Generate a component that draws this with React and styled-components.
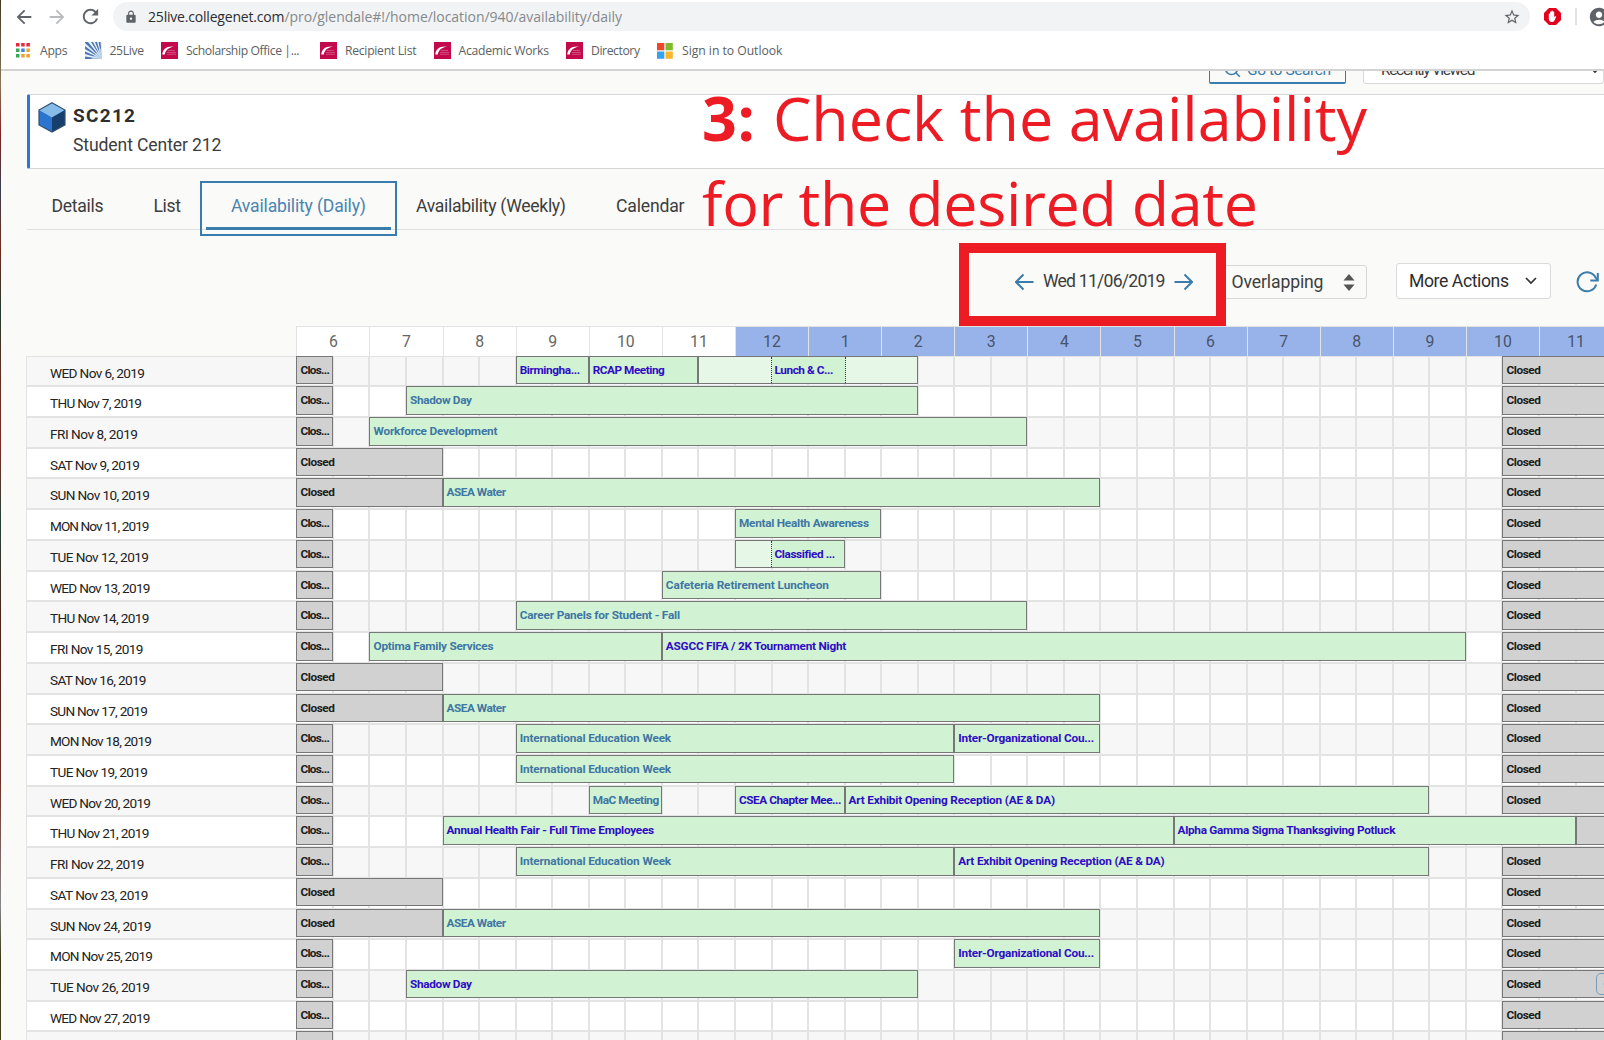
import React, { Component, createRef } from 'react';
import styled, { createGlobalStyle, css } from 'styled-components';
import {
  MdArrowBack, MdArrowForward, MdRefresh, MdLock, MdStarBorder, MdAccountCircle, MdArrowUpward,
} from 'react-icons/md';

const colors = {
  page: '#fafaf8',
  line: '#e3e3e3',
  link: '#3a7cab',
  text: '#3d3d3d',
  visited: '#2f0cc4',
  unvisited: '#3f76a3',
  booked: '#d1f3d4',
  setup: '#e6f7e8',
  closed: '#d1d1d1',
  afternoon: '#97b3ea',
  red: '#ed1c24',
};

const SLOT = 36.55; // half an hour, in px
const LAST = 36;

// columns count half hours from 6:00
const ev = (from, to, label, width, extra) => ({ from, to, label, width, ...extra });
const early = ev(0, 1, 'Clos...', 29.5, { closed: true });
const weekend = ev(0, 4, 'Closed', 34.5, { closed: true });
const late = ev(33, LAST, 'Closed', 34.5, { closed: true });
const seen = { visited: true };
const asea = ev(4, 22, 'ASEA Water', 59.5);
const interOrg = ev(18, 22, 'Inter-Organizational Cou...', 136, seen);
const eduWeek = ev(6, 18, 'International Education Week', 151.5);

const days = [
  ['WED Nov 6, 2019', 95, [
    early,
    ev(6, 8, 'Birmingha...', 60.5, seen),
    ev(8, 11, 'RCAP Meeting', 72, seen),
    ev(11, 17, 'Lunch & C...', 59, { visited: true, setup: 2, takedown: 2 }),
    late,
  ]],
  ['THU Nov 7, 2019', 92, [early, ev(3, 17, 'Shadow Day', 62), late]],
  ['FRI Nov 8, 2019', 88, [early, ev(2, 20, 'Workforce Development', 124), late]],
  ['SAT Nov 9, 2019', 90, [weekend, late]],
  ['SUN Nov 10, 2019', 100, [weekend, asea, late]],
  ['MON Nov 11, 2019', 99.5, [early, ev(12, 16, 'Mental Health Awareness', 130), late]],
  ['TUE Nov 12, 2019', 99, [
    early,
    ev(12, 15, 'Classified ...', 60.5, { visited: true, setup: 1 }),
    late,
  ]],
  ['WED Nov 13, 2019', 100.5, [early, ev(10, 16, 'Cafeteria Retirement Luncheon', 163), late]],
  ['THU Nov 14, 2019', 99.5, [early, ev(6, 20, 'Career Panels for Student - Fall', 160.5), late]],
  ['FRI Nov 15, 2019', 93.5, [
    early,
    ev(2, 10, 'Optima Family Services', 120),
    ev(10, 32, 'ASGCC FIFA / 2K Tournament Night', 180.5, seen),
    late,
  ]],
  ['SAT Nov 16, 2019', 96.5, [weekend, late]],
  ['SUN Nov 17, 2019', 98, [weekend, asea, late]],
  ['MON Nov 18, 2019', 102, [early, eduWeek, interOrg, late]],
  ['TUE Nov 19, 2019', 98, [early, eduWeek, late]],
  ['WED Nov 20, 2019', 101, [
    early,
    ev(8, 10, 'MaC Meeting', 66.5),
    ev(12, 15, 'CSEA Chapter Mee...', 102.5, seen),
    ev(15, 31, 'Art Exhibit Opening Reception (AE & DA)', 206.5, seen),
    late,
  ]],
  ['THU Nov 21, 2019', 99.5, [
    early,
    ev(4, 24, 'Annual Health Fair - Full Time Employees', 207.5, seen),
    ev(24, 35, 'Alpha Gamma Sigma Thanksgiving Potluck', 218, seen),
    ev(35, LAST, '', 0, { closed: true }),
  ]],
  ['FRI Nov 22, 2019', 94.5, [
    early,
    eduWeek,
    ev(18, 31, 'Art Exhibit Opening Reception (AE & DA)', 206.5, seen),
    late,
  ]],
  ['SAT Nov 23, 2019', 98.5, [weekend, late]],
  ['SUN Nov 24, 2019', 101.5, [weekend, asea, late]],
  ['MON Nov 25, 2019', 103, [early, interOrg, late]],
  ['TUE Nov 26, 2019', 100, [early, ev(3, 17, 'Shadow Day', 62, seen), late]],
  ['WED Nov 27, 2019', 100.5, [early, late]],
  ['', 0, [ev(0, 1, '', 0, { closed: true }), ev(33, LAST, '', 0, { closed: true })]],
];

const hours = [6, 7, 8, 9, 10, 11, 12, 1, 2, 3, 4, 5, 6, 7, 8, 9, 10, 11];

// Tracks the text in or out so it fills the given width.
class Fit extends Component {
  constructor(props) {
    super(props);
    this.ref = createRef();
    this.state = { spacing: 0 };
  }

  componentDidMount() {
    const { width, children } = this.props;
    const natural = this.ref.current.getBoundingClientRect().width;
    if (!width || children.length < 2) return;
    this.setState({ spacing: (width - natural) / (children.length - 1) });
  }

  render() {
    const { width, children } = this.props;
    return (
      <FitBox $width={width}>
        <span ref={this.ref} style={{ letterSpacing: this.state.spacing }}>{children}</span>
      </FitBox>
    );
  }
}

const CranberryIcon = () => (
  <svg width="17" height="17" viewBox="0 0 17 17">
    <rect width="17" height="17" fill="#c3094b" />
    <path d="M1.3 12.6C1.500 7 6 3.500 13.500 4.600 8 5.300 4.500 8 3.800 12.600z" fill="#fff" />
    <path d="M7 8.500h7M6 10.500h9M6 12.300h9" stroke="#d65a88" strokeWidth="0.8" />
  </svg>
);

const AppsIcon = () => (
  <svg width="14" height="15" viewBox="0 0 14 15">
    {['#e8283b', '#e8283b', '#e8283b', '#3ba55c', '#3b86e8', '#f0a02c', '#3ba55c', '#f0a02c', '#f0a02c'].map((fill, i) => (
      <rect key={i} x={(i % 3) * 5.2} y={Math.floor(i / 3) * 5.5} width="3.5" height="3.5" fill={fill} />
    ))}
  </svg>
);

const LiveIcon = () => (
  <svg width="17" height="17" viewBox="0 0 17 17">
    <rect width="17" height="17" fill="#4f76b4" />
    <path d="M17 17L0 1v3zM17 17L3 0h3zM17 17L8 0h2zM17 17L12 0h1.500zM17 17L0 7v2.500zM17 17L0 12v2.500zM17 17V0h-1.500z" fill="#e6f3fb" />
    <path d="M17 17V5L6 17z" fill="#d8eefa" opacity=".55" />
  </svg>
);

const OutlookIcon = () => (
  <svg width="16" height="16" viewBox="0 0 16 16">
    <path d="M0 0h7.300v7.300H0z" fill="#f1452b" />
    <path d="M8.500 0h7.300v7.300H8.500z" fill="#7fba2c" />
    <path d="M0 8.500h7.300v7.300H0z" fill="#35a3ee" />
    <path d="M8.500 8.500h7.300v7.300H8.500z" fill="#fbb62d" />
  </svg>
);

const BlockerIcon = () => (
  <svg width="17" height="17" viewBox="0 0 17 17">
    <path d="M5 0h7l5 5v7l-5 5H5l-5-5V5z" fill="#e2001c" />
    <path d="M4.800 8.500V6q.7-.9 1.300 0V3.800q.8-.8 1.300 0V3q.8-.9 1.400 0v.8q.8-.8 1.400 0V9l1-.8q1-.3 1 .5l-1.700 3.800q-.8 1.500-2.500 1.500-3.200 0-3.200-3.500z" fill="#fff" />
  </svg>
);

const CubeIcon = () => (
  <svg width="28" height="31" viewBox="0 0 28 31">
    <path d="M14 .8L27 8v15L14 30 1 23V8z" fill="#2b74d0" />
    <path d="M14 .8L27 8l-13 7.500L1 8z" fill="#88bce8" />
    <path d="M27 8v15l-13 7V15.500z" fill="#173f6b" />
    <path d="M14 .8L27 8v15L14 30 1 23V8z" fill="none" stroke="#33526f" strokeWidth="1.2" />
  </svg>
);

const Arrow = ({ flip }) => (
  <svg width="19" height="18" viewBox="0 0 19 18" fill="none" stroke={colors.link} strokeWidth="2">
    <path d={flip ? 'M.5 9H17.500M10.500 1.500L18 9l-7.500 7.500' : 'M18.500 9H1.500M8.500 1.500L1 9l7.500 7.500'} />
  </svg>
);

const Sorter = () => (
  <svg width="12" height="17" viewBox="0 0 12 17" fill="#555">
    <path d="M6 0l5.500 6.500H.5zM6 17l5.500-6.500H.5z" />
  </svg>
);

const Chevron = () => (
  <svg width="12" height="8" viewBox="0 0 12 8" fill="none" stroke="#333" strokeWidth="1.7">
    <path d="M1 1l5 5 5-5" />
  </svg>
);

const ReloadIcon = () => (
  <svg width="23" height="22" viewBox="0 0 23 22" fill="none" stroke={colors.link} strokeWidth="2">
    <path d="M20.200 13.500A9.500 9.500 0 1 1 19.600 6.500L21.500 9" />
    <path d="M21.800 2v7.500h-7.500" />
  </svg>
);

const SearchIcon = () => (
  <svg width="17" height="17" viewBox="0 0 17 17" fill="none" stroke={colors.link} strokeWidth="1.6">
    <circle cx="7.5" cy="7.5" r="6" />
    <path d="M11.800 11.800l4 4" />
  </svg>
);

const bookmarks = [
  [AppsIcon, 'Apps', 27.5, 10],
  [LiveIcon, '25Live', 34.5],
  [CranberryIcon, 'Scholarship Office |...', 113.5, 8, 3.5],
  [CranberryIcon, 'Recipient List', 71.5],
  [CranberryIcon, 'Academic Works', 90.5],
  [CranberryIcon, 'Directory', 49],
  [OutlookIcon, 'Sign in to Outlook', 100.5, 9],
];

const tabs = [
  ['Details', 52],
  ['List', 27.5],
  ['Availability (Daily)', 135],
  ['Availability (Weekly)', 150],
  ['Calendar', 68.5],
];

class App extends Component {
  state = { tab: 2 };

  handleTab = tab => () => this.setState({ tab });

  renderEvent = (item) => {
    const span = item.to - item.from;
    return (
      <Event key={item.from} $from={item.from} $span={span} $closed={item.closed}>
        {item.setup && <Padding $slots={item.setup} $side="right" />}
        <EventText $closed={item.closed} $visited={item.visited}>
          {item.label && <Fit width={item.width}>{item.label}</Fit>}
        </EventText>
        {item.takedown && <Padding $slots={item.takedown} $side="left" />}
      </Event>
    );
  };

  render() {
    const { tab: active } = this.state;

    return (
      <Screen>
        <GlobalStyle />
        <DesktopEdge />
        <Window>
          <BrowserBar>
            <NavButtons>
              <MdArrowBack size={22} />
              <MdArrowForward size={22} color="#b9bbbd" />
              <MdRefresh size={23} />
            </NavButtons>
            <AddressBar>
              <MdLock size={14} color="#5f6368" />
              <Address>
                <Fit width={136.5}>25live.collegenet.com</Fit>
                <AddressPath>
                  <Fit width={337.5}>/pro/glendale#!/home/location/940/availability/daily</Fit>
                </AddressPath>
              </Address>
              <MdStarBorder size={18} />
            </AddressBar>
            <Extensions>
              <BlockerIcon />
              <Divider />
              <MdAccountCircle size={22} />
            </Extensions>
          </BrowserBar>
          <Bookmarks>
            {bookmarks.map(([Icon, label, width, gap, after]) => (
              <Bookmark key={label} $gap={gap} $after={after}>
                <Icon />
                <Fit width={width}>{label}</Fit>
              </Bookmark>
            ))}
          </Bookmarks>

          <QuickLinks>
            <SearchButton>
              <SearchIcon />
              <Fit width={84}>Go to Search</Fit>
            </SearchButton>
            <RecentSelect>
              <Fit width={94.5}>Recently Viewed</Fit>
              <Chevron />
            </RecentSelect>
          </QuickLinks>

          <LocationCard>
            <CubeIcon />
            <div>
              <LocationName><Fit width={62}>SC212</Fit></LocationName>
              <LocationTitle><Fit width={148.5}>Student Center 212</Fit></LocationTitle>
            </div>
          </LocationCard>

          <Tabs>
            {tabs.map(([label, width], i) => (
              <Tab key={label} $active={i === active} onClick={this.handleTab(i)}>
                <Fit width={width}>{label}</Fit>
              </Tab>
            ))}
          </Tabs>

          <Toolbar>
            <Arrow />
            <DateText><Fit width={122.5}>Wed 11/06/2019</Fit></DateText>
            <Arrow flip />
            <ModeSelect>
              <Fit width={92}>Overlapping</Fit>
              <Sorter />
            </ModeSelect>
            <ActionsButton>
              <Fit width={100}>More Actions</Fit>
              <Chevron />
            </ActionsButton>
            <ReloadIcon />
          </Toolbar>

          <HourRow>
            {hours.map((hour, i) => <Hour key={i} $pm={i > 5}>{hour}</Hour>)}
          </HourRow>
          {days.map(([label, width, items], i) => (
            <DayRow key={i} $odd={i % 2 === 0}>
              <DayLabel>{label && <Fit width={width}>{label}</Fit>}</DayLabel>
              <Slots>
                {Array.from({ length: LAST }, (_, n) => <Slot key={n} $column={n} />)}
                {items.map(this.renderEvent)}
              </Slots>
            </DayRow>
          ))}
        </Window>

        <Note>
          <NoteLine>
            <b><Fit width={53}>3:</Fit></b>
            <Fit width={594}>Check the availability</Fit>
          </NoteLine>
          <NoteLine><Fit width={556}>for the desired date</Fit></NoteLine>
        </Note>
        <Highlight />
        <ScrollTop><MdArrowUpward size={14} /></ScrollTop>
      </Screen>
    );
  }
}

const GlobalStyle = createGlobalStyle`
  * { box-sizing: border-box; }
  body {
    margin: 0;
    overflow: hidden;
    background: ${colors.page};
    font-family: Roboto, "Liberation Sans", sans-serif;
    color: ${colors.text};
  }
  svg { display: block; flex-shrink: 0; }
`;

const FitBox = styled.span`
  display: inline-block;
  flex-shrink: 0;
  width: ${props => props.$width}px;
  white-space: pre;
`;

const Screen = styled.div`
  position: relative;
  display: flex;
  width: 1604px;
  height: 1040px;
  overflow: hidden;
`;

const DesktopEdge = styled.div`
  width: 1px;
  background: linear-gradient(#40361f, #8a7658 8%, #7d2222 13%, #39404e 18%, #6d2b1d 24%, #21392f 30%, #5f3020 36%, #772c26 43%, #24423a 50%, #4e2319 60%, #6b3025 75%, #87888c 87%, #3c3b18 92%, #41401b);
`;

const Window = styled.div`
  width: 1603px;
  height: 1040px;
  overflow: hidden;
  flex-shrink: 0;
`;

const BrowserBar = styled.div`
  display: flex;
  align-items: center;
  height: 33px;
  background: #fff;
  color: #5f6368;
`;

const NavButtons = styled.div`
  display: flex;
  align-items: center;
  flex-shrink: 0;
  gap: 11px;
  width: 112px;
  padding-left: 12px;
`;

const AddressBar = styled.div`
  display: flex;
  align-items: center;
  flex-shrink: 0;
  width: 1417px;
  height: 29px;
  padding: 0 9px 0 11px;
  border-radius: 15px;
  background: #f1f3f4;
`;

const Address = styled.div`
  flex: 1;
  margin-left: 10px;
  font: 14px/28px "Open Sans", "Noto Sans", sans-serif;
  color: #2b2d30;
`;

const AddressPath = styled.span`
  color: #85898d;
`;

const Extensions = styled.div`
  display: flex;
  align-items: center;
  flex-shrink: 0;
  margin-left: 14px;
`;

const Divider = styled.div`
  width: 2px;
  height: 17px;
  margin: 0 11px 0 14px;
  background: #e0e2e4;
`;

const Bookmarks = styled.div`
  display: flex;
  align-items: center;
  gap: 17px;
  height: 38px;
  padding: 0 0 1px 15px;
  border-bottom: 2px solid #d3d3d3;
  background: #fff;
  font: 12.2px/20px "Open Sans", "Noto Sans", sans-serif;
  color: #5c5f63;
`;

const Bookmark = styled.div`
  display: flex;
  align-items: center;
  gap: ${props => props.$gap || 8}px;
  margin-right: ${props => props.$after || 0}px;
`;

const QuickLinks = styled.div`
  display: flex;
  gap: 17px;
  height: 23px;
  padding-left: 1208px;
  overflow: hidden;
  font-size: 15.5px;
  line-height: 18px;
`;

const SearchButton = styled.div`
  display: flex;
  align-items: center;
  gap: 6px;
  flex-shrink: 0;
  width: 137px;
  height: 30px;
  margin-top: -17px;
  padding: 2px 14px 0;
  border: 1px solid ${colors.link};
  border-bottom-width: 2px;
  border-radius: 2px;
  color: ${colors.link};
`;

const RecentSelect = styled.div`
  display: flex;
  align-items: center;
  justify-content: space-between;
  flex-shrink: 0;
  width: 241px;
  height: 30px;
  margin-top: -17px;
  padding: 2px 2px 0 17px;
  border: 1px solid #d9d9d9;
  border-radius: 3px;
  background: #fff;
`;

const LocationCard = styled.div`
  display: flex;
  gap: 7px;
  height: 75px;
  margin-left: 26px;
  padding: 7px 0 0 8px;
  border: 1px solid #d6d6d6;
  border-left: 3px solid #2f75d6;
  border-right: 0;
  border-radius: 2px 0 0 2px;
  background: #fff;
`;

const LocationName = styled.div`
  margin-top: 2px;
  font-size: 19px;
  font-weight: 700;
  line-height: 24px;
  color: #2f2f2f;
`;

const LocationTitle = styled.div`
  margin-top: 5px;
  font-size: 17.6px;
  line-height: 25px;
`;

const Tabs = styled.div`
  display: flex;
  height: 61px;
  margin-left: 25.5px;
  padding-top: 18px;
  border-bottom: 1px solid #e0e0e0;
`;

const Tab = styled.div`
  height: 43px;
  padding: 0 25px;
  font-size: 17.6px;
  line-height: 38px;
  cursor: pointer;
  ${props => props.$active && css`
    border-bottom: 3px solid ${colors.link};
    outline: 2px solid ${colors.link};
    outline-offset: 4px;
    color: #4b84b1;
  `}
`;

const Toolbar = styled.div`
  display: flex;
  align-items: center;
  height: 96px;
  padding: 8px 0 0 1014px;
  font-size: 17.6px;
`;

const DateText = styled.div`
  flex-shrink: 0;
  margin: -3px 8px 0 9px;
`;

const ModeSelect = styled.div`
  display: flex;
  align-items: center;
  justify-content: space-between;
  flex-shrink: 0;
  width: 150px;
  height: 34px;
  margin-left: 24.5px;
  padding: 0 11px 0 13.5px;
  border: 1px solid #d6d6d6;
  border-radius: 3px;
`;

const ActionsButton = styled.div`
  display: flex;
  align-items: center;
  justify-content: space-between;
  flex-shrink: 0;
  width: 155px;
  height: 36px;
  margin: -2px 25px 0 29px;
  padding: 0 13px 0 12px;
  border: 1px solid #dadada;
  border-radius: 3px;
  background: #fff;
  color: #2d2d2d;
`;

const HourRow = styled.div`
  display: grid;
  grid-template-columns: repeat(18, ${SLOT * 2}px);
  height: 29.6px;
  margin-left: 295.4px;
`;

const Hour = styled.div`
  padding-top: 1px;
  border-top: 1px solid ${colors.line};
  border-left: 1px solid ${colors.line};
  background: ${props => (props.$pm ? colors.afternoon : '#fff')};
  color: ${props => (props.$pm ? '#49546b' : '#666')};
  font-size: 15.8px;
  line-height: 28px;
  text-align: center;
`;

const DayRow = styled.div`
  display: flex;
  height: 30.72px;
  margin-left: 25px;
  border-top: 1px solid ${colors.line};
  border-bottom: 1px solid ${colors.line};
  background: ${props => (props.$odd ? '#f7f7f7' : '#fff')};
`;

const DayLabel = styled.div`
  flex-shrink: 0;
  width: 270.4px;
  padding: 2px 0 0 23px;
  border-left: 1px solid ${colors.line};
  font-size: 13.6px;
  line-height: 28px;
  color: #222;
`;

const Slots = styled.div`
  display: grid;
  grid-template-columns: repeat(${LAST}, ${SLOT}px);
  grid-template-rows: 28.72px;
`;

const Slot = styled.div`
  grid-row: 1;
  grid-column: ${props => props.$column + 1};
  border: solid ${colors.line};
  border-width: 0 1px;
`;

const Event = styled.div`
  display: flex;
  grid-row: 1;
  grid-column: ${props => props.$from + 1} / span ${props => props.$span};
  z-index: 1;
  height: 28.5px;
  margin-top: -1px;
  border: 1px solid #777;
  background: ${props => (props.$closed ? colors.closed : colors.booked)};
`;

const EventText = styled.div`
  flex: 1;
  min-width: 0;
  padding-left: 3px;
  font-size: 11.8px;
  font-weight: 700;
  line-height: 26px;
  color: ${props => (props.$visited ? colors.visited : colors.unvisited)};
  ${props => props.$closed && 'color: #1c1c1c;'}
`;

const Padding = styled.div`
  flex-shrink: 0;
  width: ${props => props.$slots * SLOT - 1}px;
  border-${props => props.$side}: 1px dotted #333;
  background: ${colors.setup};
`;

const Note = styled.div`
  position: absolute;
  top: 75px;
  left: 702px;
  z-index: 2;
  font: 61px/85px "Open Sans", "Noto Sans", sans-serif;
  color: ${colors.red};
`;

const NoteLine = styled.div`
  display: flex;
  gap: 18px;
  height: 85px;
`;

const Highlight = styled.div`
  position: absolute;
  top: 243px;
  left: 959px;
  z-index: 2;
  width: 267px;
  height: 83px;
  border: 10px solid ${colors.red};
`;

const ScrollTop = styled.div`
  position: absolute;
  top: 973px;
  left: 1596px;
  z-index: 2;
  width: 24px;
  height: 22px;
  padding: 3px 0 0 4px;
  border: 1px solid #7d9ab5;
  border-radius: 5px;
  color: #7d9ab5;
`;

export default App;
